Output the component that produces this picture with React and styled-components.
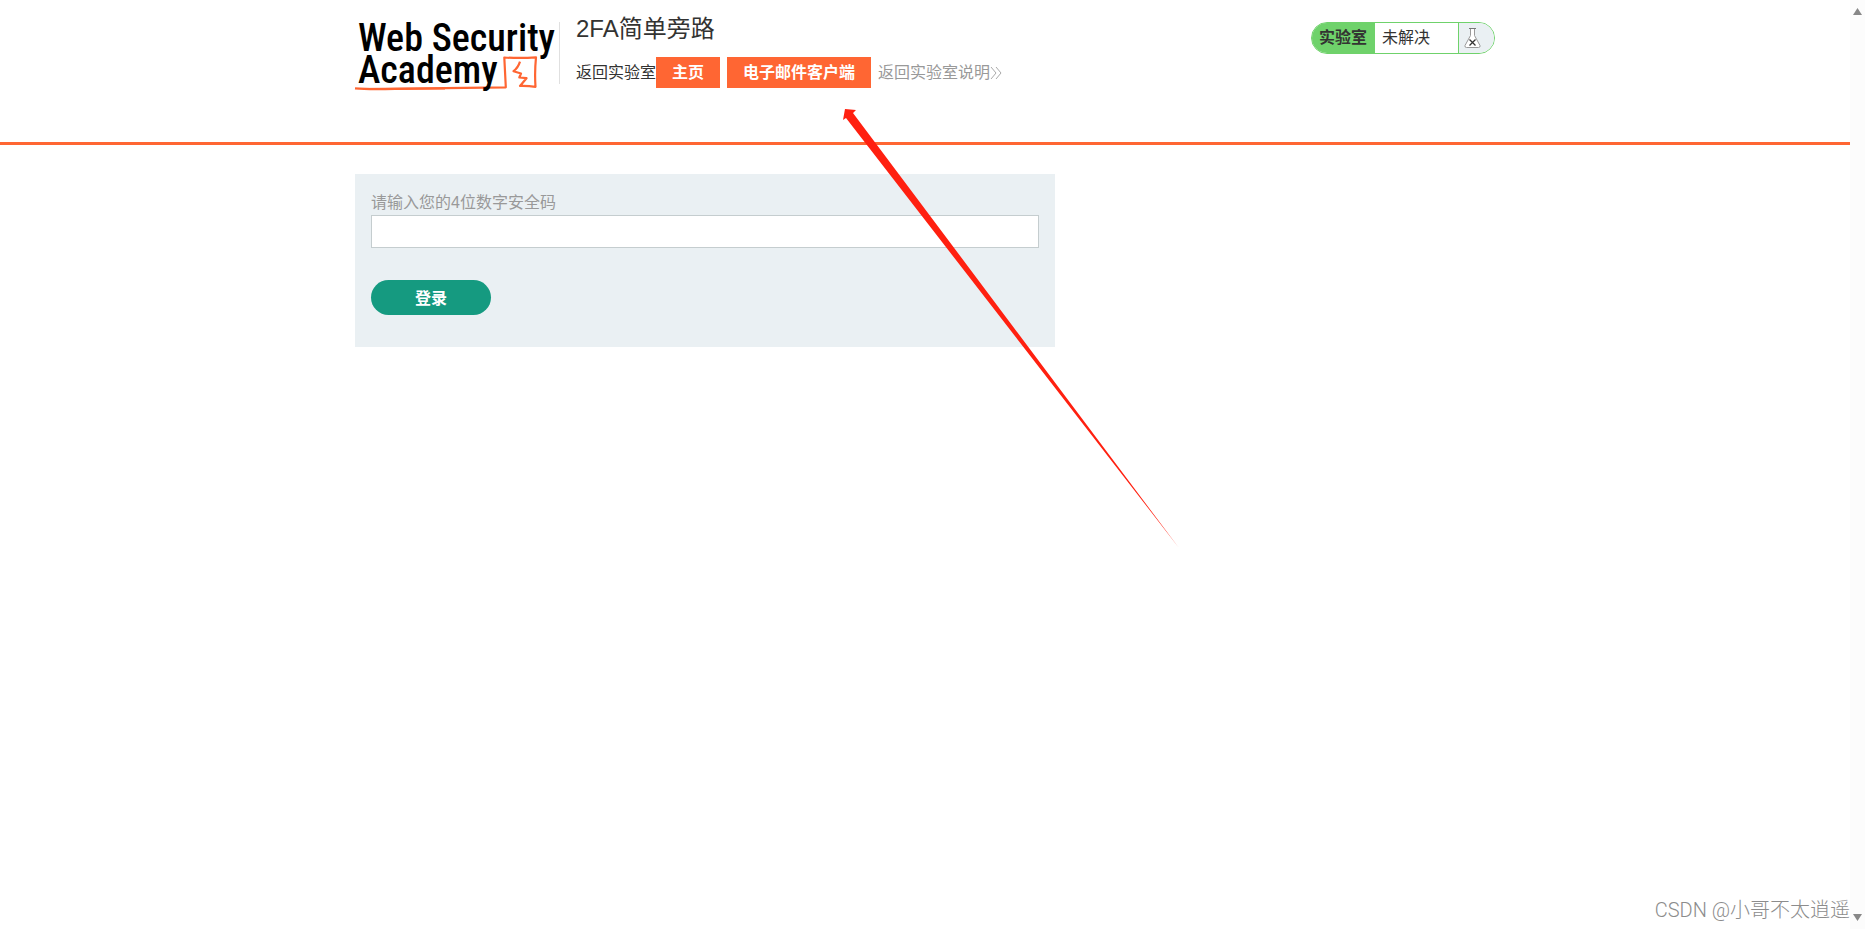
import { useState } from "react";
import styled, { createGlobalStyle } from "styled-components";

const GlobalStyle = createGlobalStyle`
  * {
    box-sizing: border-box;
  }
  body {
    margin: 0;
    background: #fff;
    color: #333332;
    font-family: "Liberation Sans", "Noto Sans CJK SC", sans-serif;
    font-size: 16px;
  }
`;
const Page = styled.div`
  position: relative;
  display: flex;
  min-height: 100vh;
  overflow: hidden;
`;
const Main = styled.main`
  flex: 1;
  min-width: 0;
`;
const ScrollTrack = styled.div`
  display: flex;
  flex-direction: column;
  justify-content: space-between;
  align-items: center;
  width: 15px;
  padding: 8px 0;
  background: #fcfcfc;
`;
const Header = styled.header`
  border-bottom: 3px solid #ff6633;
`;
const Container = styled.div`
  width: 100%;
  max-width: 1140px;
  margin: 0 auto;
`;
const HeaderRow = styled(Container)`
  display: flex;
  align-items: flex-start;
  padding: 12px 0 48px;
`;
const LogoLink = styled.a`
  display: block;
  color: #000;
  & svg {
    display: block;
    overflow: visible;
  }
`;
const LogoText = styled.text`
  font-family: "Roboto Condensed", Roboto, sans-serif;
  font-size: 38px;
  font-weight: 500;
`;
const TitleBox = styled.div`
  flex: 1;
  display: flex;
  flex-direction: column;
  gap: 11px;
`;
const Title = styled.h2`
  margin: 0;
  font-size: 24px;
  font-weight: 400;
  line-height: 34px;
`;
const Separator = styled.div`
  width: 1px;
  height: 62px;
  margin: 10px 16px 0 4px;
  background: #e0e0e0;
`;
const Links = styled.nav`
  display: flex;
  align-items: center;
  line-height: 31px;
`;
const TextLink = styled.a`
  display: flex;
  align-items: center;
  color: ${(props) => (props.$muted ? "#999" : "#333332")};
  text-decoration: none;
`;
const ButtonLink = styled.a`
  margin-right: 7px;
  padding: 0 16px;
  background: #ff6633;
  color: #fff;
  font-weight: 700;
  text-decoration: none;
`;
const Status = styled.div`
  display: flex;
  height: 32px;
  margin-top: 10px;
  border: 1px solid #6fd26b;
  border-radius: 16px;
  overflow: hidden;
  line-height: 30px;
`;
const StatusLabel = styled.div`
  padding: 0 8px 0 7px;
  background: #6fd26b;
  font-weight: 700;
`;
const StatusValue = styled.div`
  width: 83px;
  padding-left: 7px;
`;
const StatusIcon = styled.div`
  width: 36px;
  padding: 5px;
  border-left: 1px solid #6fd26b;
  background: #eaf0f3;
  & svg {
    display: block;
  }
`;
const LoginForm = styled.form`
  display: flex;
  flex-direction: column;
  align-items: flex-start;
  max-width: 700px;
  margin-top: 29px;
  padding: 16px 16px 32px;
  background: #eaf0f3;
  & label {
    color: #999;
    line-height: 25px;
  }
  & input {
    width: 100%;
    height: 33px;
    padding: 0 8px;
    border: 1px solid #c5cdcf;
    outline: none;
    font: inherit;
  }
`;
const LoginButton = styled.button`
  width: 120px;
  height: 35px;
  margin-top: 32px;
  padding: 0 0 2px;
  border: none;
  border-radius: 18px;
  background: #159a80;
  color: #fff;
  font: inherit;
  font-weight: 700;
`;
const Pointer = styled.svg`
  position: absolute;
  top: 0;
  left: 0;
  pointer-events: none;
`;
const Watermark = styled.div`
  position: absolute;
  right: 15px;
  bottom: 4px;
  color: #8c8c8c;
  font-family: Roboto, "Noto Sans CJK SC", sans-serif;
  font-size: 20px;
  font-weight: 300;
  line-height: 30px;
`;

const Logo = () => (
  <svg width="200" height="82" viewBox="0 -6 200 82">
    <path
      d="M0 70.300Q12 71.500 40 70.800T110 69.800L150.800 69.300L149.300 39.500Q166 40.500 181 39.300Q179.500 54 180.500 68.800Q173 67.800 165 68L171.500 60.200L164.300 59.500L166 55.500L158.500 53.200Q163 50 165 43.700"
      fill="none"
      stroke="#ff6633"
      strokeWidth="2.200"
      strokeLinejoin="round"
    />
    <path d="M0 70L30 69.800L90 69.500V71.500L30 72Z" fill="#ff6633" />
    <LogoText fill="currentColor">
      <tspan x="3" y="33">
        Web Security
      </tspan>
      <tspan x="3" y="65">
        Academy
      </tspan>
    </LogoText>
  </svg>
);
const FlaskIcon = () => (
  <svg width="18" height="20" viewBox="0 0 18 20">
    <path d="M6.500 .5V7.500L1 17.500Q.5 19.500 2.500 19.500H14.500Q16.500 19.500 16 17.500L10.500 7.500V.5Z" fill="#fff" stroke="#999" />
    <path d="M5 .5H12" stroke="#777" />
    <path d="M5.500 11.500L11.500 17.500M11.500 11.500L5.500 17.500" stroke="#333332" strokeWidth="1.300" />
  </svg>
);
const Chevrons = () => (
  <svg width="13" height="14" viewBox="0 0 13 14">
    <path d="M1 1L6 7L1 13M6 1L11 7L6 13" fill="none" stroke="#aaa" />
  </svg>
);
const ScrollArrow = (props) => (
  <svg width="9" height="7" viewBox="0 0 9 7">
    <path d={props.down ? "M0 0H9L4.500 7Z" : "M0 7H9L4.500 0Z"} fill="#888" />
  </svg>
);

const App = () => {
  const [code, setCode] = useState("");

  return (
    <>
      <GlobalStyle />
      <Page>
        <Main>
          <Header>
            <HeaderRow>
              <LogoLink href="#academy" aria-label="Web Security Academy">
                <Logo />
              </LogoLink>
              <Separator />
              <TitleBox>
                <Title>2FA简单旁路</Title>
                <Links>
                  <TextLink href="#lab">返回实验室</TextLink>
                  <ButtonLink href="#home">主页</ButtonLink>
                  <ButtonLink href="#email">电子邮件客户端</ButtonLink>
                  <TextLink href="#description" $muted>
                    返回实验室说明
                    <Chevrons />
                  </TextLink>
                </Links>
              </TitleBox>
              <Status>
                <StatusLabel>实验室</StatusLabel>
                <StatusValue>未解决</StatusValue>
                <StatusIcon>
                  <FlaskIcon />
                </StatusIcon>
              </Status>
            </HeaderRow>
          </Header>
          <Container>
            <LoginForm onSubmit={(e) => e.preventDefault()}>
              <label htmlFor="code">请输入您的4位数字安全码</label>
              <input
                id="code"
                type="text"
                value={code}
                onChange={(e) => setCode(e.target.value)}
              />
              <LoginButton type="submit">登录</LoginButton>
            </LoginForm>
          </Container>
        </Main>
        <ScrollTrack>
          <ScrollArrow />
          <ScrollArrow down />
        </ScrollTrack>
        <Pointer width="1200" height="560" viewBox="0 0 1200 560">
          <path d="M845 109L856 110L853 113L1179 548L846 118L843 120Z" fill="#ff2010" />
        </Pointer>
        <Watermark>CSDN @小哥不太逍遥</Watermark>
      </Page>
    </>
  );
};

export default App;
